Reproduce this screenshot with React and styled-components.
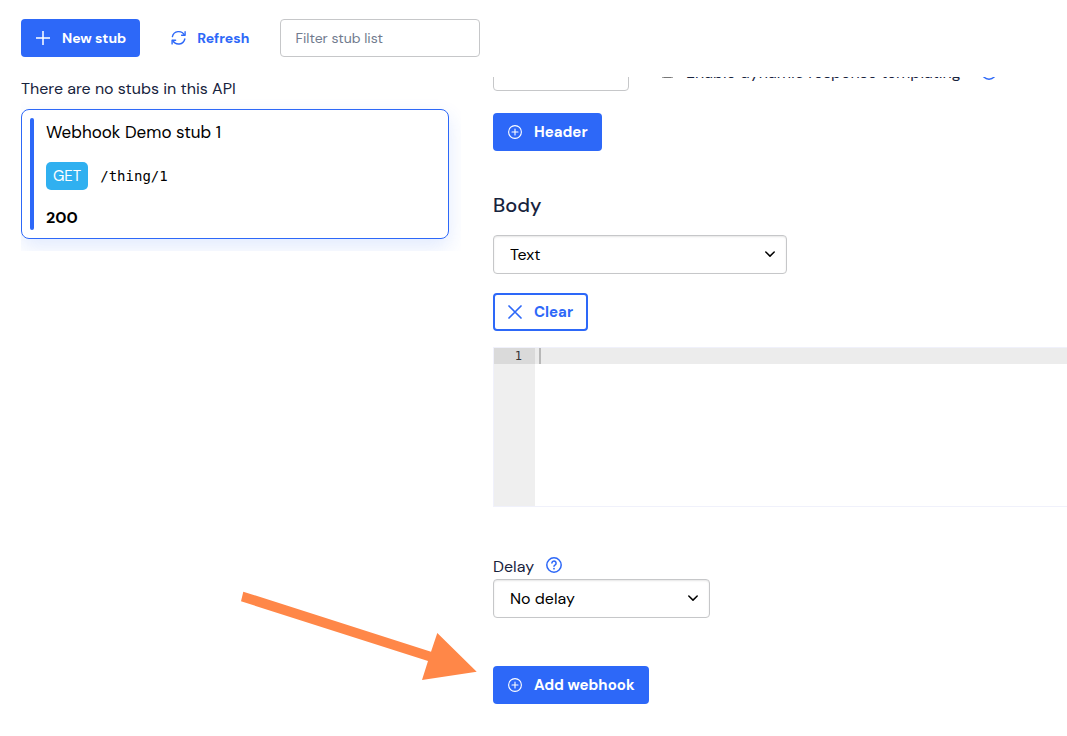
import React from 'react';
import styled, { createGlobalStyle, css } from 'styled-components';

const theme = {
  blue: '#2d68f8',
  sky: '#30b0f0',
  navy: '#17233d',
  grey: '#c6c7c9',
  orange: '#ff8748',
  sans: '"DM Sans", Inter, "Liberation Sans", sans-serif',
  mono: '"DejaVu Sans Mono", "Liberation Mono", monospace',
};

const PlusIcon = () => (
  <svg width="14" height="14" viewBox="0 0 14 14" fill="none" stroke="currentColor" strokeWidth="1.5" aria-hidden="true">
    <path d="M7 0v14M0 7h14" />
  </svg>
);

const RefreshIcon = () => (
  <svg width="16" height="16" viewBox="0 0 16 16" fill="none" stroke="currentColor" strokeWidth="1.4" strokeLinecap="round" strokeLinejoin="round" aria-hidden="true">
    <path d="M14.1 1.8v3.5h-3.5M1.1 13.9v-3.6h3.5" />
    <path d="M1.4 6.6A6.4 6.4 0 0 1 13.4 5.2M13.8 9A6.4 6.4 0 0 1 1.9 10.6" />
  </svg>
);

const PlusCircleIcon = () => (
  <svg width="14" height="14" viewBox="0 0 14 14" fill="none" stroke="currentColor" strokeWidth="1.1" strokeLinecap="round" aria-hidden="true">
    <circle cx="7" cy="7" r="6.4" />
    <path d="M7 4v6M4 7h6" />
  </svg>
);

const CloseIcon = () => (
  <svg width="14" height="14" viewBox="0 0 14 14" fill="none" stroke="currentColor" strokeWidth="1.7" strokeLinecap="round" aria-hidden="true">
    <path d="M1 1l12 12M13 1L1 13" />
  </svg>
);

const HelpIcon = () => (
  <svg width="16" height="16" viewBox="0 0 16 16" fill="none" stroke="currentColor" strokeWidth="1.5" strokeLinecap="round" aria-hidden="true">
    <circle cx="8" cy="8" r="7.2" />
    <path d="M5.9 6.1a2.1 2.1 0 1 1 3.3 1.7c-.8.5-1.2.8-1.2 1.4" />
    <circle cx="8" cy="11.7" r=".9" fill="currentColor" stroke="none" />
  </svg>
);

const ChevronIcon = () => (
  <svg width="12" height="12" viewBox="0 0 12 12" fill="none" stroke="#000" strokeWidth="1.5" strokeLinecap="round" strokeLinejoin="round" aria-hidden="true">
    <path d="M1.8 4L6 8.1L10.2 4" />
  </svg>
);

const Select = ({ id, options, width, label }) => (
  <SelectOuter $width={width}>
    <select id={id} aria-label={label}>
      {options.map(option => <option key={option}>{option}</option>)}
    </select>
    <ChevronIcon />
  </SelectOuter>
);

class App extends React.Component {
  render() {
    return (
      <>
        <GlobalStyle />
        <Page>
          <Toolbar>
            <Button $small><PlusIcon />New stub</Button>
            <Button $small $variant="link"><RefreshIcon />Refresh</Button>
            <FilterInput type="text" placeholder="Filter stub list" aria-label="Filter stub list" />
          </Toolbar>

          <Columns>
            <StubList>
              <p>There are no stubs in this API</p>
              <StubCard>
                <StubBar />
                <StubInfo>
                  <StubName>Webhook Demo stub 1</StubName>
                  <StubRequest>
                    <Method>GET</Method>
                    <code>/thing/1</code>
                  </StubRequest>
                  <strong>200</strong>
                </StubInfo>
              </StubCard>
            </StubList>

            <StubForm>
              <ScrolledRow>
                <StatusRow>
                  <StatusInput type="text" placeholder="200" aria-label="Status" />
                  <TemplatingLabel>
                    <input type="checkbox" />
                    Enable dynamic response templating
                  </TemplatingLabel>
                  <HelpButton aria-label="About templating"><HelpIcon /></HelpButton>
                </StatusRow>
              </ScrolledRow>
              <Button><PlusCircleIcon />Header</Button>

              <h2>Body</h2>
              <Select label="Body type" options={['Text', 'JSON', 'XML']} width={294} />
              <ClearButton $variant="outline"><CloseIcon />Clear</ClearButton>
              <Editor>
                <Gutter>1</Gutter>
                <EditorText aria-label="Body" spellCheck="false" />
                <Caret />
              </Editor>

              <DelayLabel>
                <label htmlFor="delay">Delay</label>
                <HelpButton aria-label="About delay"><HelpIcon /></HelpButton>
              </DelayLabel>
              <Select id="delay" options={['No delay', 'Fixed', 'Random']} width={217} />

              <WebhookRow>
                <Button><PlusCircleIcon />Add webhook</Button>
                <Arrow width="240" height="92" viewBox="0 0 240 92" aria-hidden="true">
                  <path d="M3.3 1.7L191 61.7L197.3 43L236.7 81.7L182 90L188 71L1 11.3Z" />
                </Arrow>
              </WebhookRow>
            </StubForm>
          </Columns>
        </Page>
      </>
    );
  };
}

export default App;

const GlobalStyle = createGlobalStyle`
  * {
    box-sizing: border-box;
  }
  body {
    margin: 0;
    background: #fff;
    color: ${theme.navy};
    font: 400 16px/24px ${theme.sans};
  }
  h2, p {
    margin: 0;
  }
  button, input, select, textarea {
    font-family: inherit;
    margin: 0;
  }
  svg {
    flex: none;
  }
`;

const Page = styled.div`
  padding: 19px 0 32px 21px;
  overflow: hidden;
`;

const Toolbar = styled.div`
  display: flex;
  gap: 16px;
  margin-bottom: 20px;
`;

const variants = {
  outline: css`
    background: #fff;
    border: 2px solid ${theme.blue};
    color: ${theme.blue};
    padding: 0 13px;
  `,
  link: css`
    background: transparent;
    color: ${theme.blue};
    padding: 0 15px;
    gap: 10px;
  `,
};

const Button = styled.button`
  display: inline-flex;
  align-items: center;
  gap: 12px;
  height: 38px;
  padding: 0 14px 0 15px;
  border: 0;
  border-radius: 4px;
  background: ${theme.blue};
  color: #fff;
  font-size: ${props => (props.$small ? 14 : 15)}px;
  font-weight: 700;
  white-space: nowrap;
  cursor: pointer;
  ${props => variants[props.$variant]}
`;

const ClearButton = styled(Button)`
  margin: 19px 0 16px;
`;

const FilterInput = styled.input`
  width: 200px;
  height: 38px;
  padding: 0 14px;
  border: 1px solid ${theme.grey};
  border-radius: 4px;
  font-size: 14px;

  &::placeholder {
    color: #717b8e;
  }
`;

const Columns = styled.div`
  display: grid;
  grid-template-columns: minmax(300px, 440px) 1fr;
  gap: 32px;
  align-items: start;
`;

const StubList = styled.section`
  padding: 0 12px 12px 0;
  overflow: hidden;
`;

const StubCard = styled.article`
  display: flex;
  gap: 12px;
  margin-top: 8px;
  padding: 8px;
  border: 1px solid ${theme.blue};
  border-radius: 8px;
  box-shadow: 0 8px 20px rgba(45, 104, 248, 0.14);
  color: #000;
`;

const StubBar = styled.div`
  width: 4px;
  border-radius: 2px;
  background: ${theme.blue};
`;

const StubInfo = styled.div`
  display: flex;
  flex-direction: column;
  gap: 16px;
`;

const StubName = styled.div`
  font-size: 17px;
  line-height: 28px;
`;

const StubRequest = styled.div`
  display: flex;
  align-items: center;
  gap: 12px;

  code {
    font-family: ${theme.mono};
    font-size: 14px;
  }
`;

const Method = styled.span`
  padding: 0 7px;
  border-radius: 5px;
  background: ${theme.sky};
  color: #fff;
  font-size: 15px;
  line-height: 28px;
`;

const StubForm = styled.section`
  display: flex;
  flex-direction: column;
  align-items: flex-start;
  min-width: 0;

  h2 {
    margin: 39px 0 15px;
    font-size: 20px;
    font-weight: 500;
    line-height: 30px;
  }
`;

// only the bottom edge of this row is left in view once the form is scrolled
const ScrolledRow = styled.div`
  display: flex;
  align-items: flex-end;
  width: 100%;
  height: 14px;
  margin-bottom: 22px;
  overflow: hidden;
`;

const StatusRow = styled.div`
  display: flex;
  align-items: center;
  flex: none;
  height: 38px;
`;

const StatusInput = styled.input`
  width: 136px;
  height: 38px;
  margin-right: 32px;
  padding: 0 16px;
  border: 1px solid ${theme.grey};
  border-radius: 4px;
  font-size: 14px;

  &::placeholder {
    color: #e4e6ea;
  }
`;

const TemplatingLabel = styled.label`
  display: flex;
  align-items: center;
  align-self: flex-end;
  gap: 12px;
  margin-right: 20px;
  line-height: 36px;

  input {
    margin-bottom: 4px;
  }
`;

const HelpButton = styled.button`
  display: flex;
  padding: 2px 0;
  border: 0;
  background: none;
  color: ${theme.blue};
  cursor: pointer;
`;

const SelectOuter = styled.div`
  position: relative;
  width: ${props => props.$width}px;
  max-width: 100%;

  select {
    display: block;
    width: 100%;
    height: 39px;
    padding: 0 40px 0 16px;
    border: 1px solid ${theme.grey};
    border-radius: 4px;
    background: #fff;
    box-shadow: inset 0 1px 2px rgba(0, 0, 0, 0.1);
    color: #000;
    font-size: 16px;
    appearance: none;
  }

  svg {
    position: absolute;
    top: 13px;
    right: 11px;
    pointer-events: none;
  }
`;

const Editor = styled.div`
  display: flex;
  position: relative;
  width: 100%;
  height: 160px;
  border: 1px solid #f0f1fb;
  border-right: 0;
  font: 12px/16px ${theme.mono};
`;

const Gutter = styled.div`
  width: 41px;
  padding-right: 13px;
  background: linear-gradient(#dadada 16px, #efefef 16px);
  color: #333;
  text-align: right;
`;

const EditorText = styled.textarea`
  flex: 1;
  min-width: 0;
  padding: 0 4px;
  border: 0;
  outline: 0;
  background: linear-gradient(#ececec 16px, #fff 16px);
  font: inherit;
  resize: none;
`;

const Caret = styled.span`
  position: absolute;
  top: 0;
  left: 45px;
  width: 2px;
  height: 16px;
  background: #b8b8b8;
`;

const DelayLabel = styled.div`
  display: flex;
  align-items: flex-start;
  gap: 12px;
  margin-top: 48px;
`;

const WebhookRow = styled.div`
  position: relative;
  margin-top: 48px;
`;

const Arrow = styled.svg`
  position: absolute;
  top: -76px;
  right: 100%;
  margin-right: 13px;
  fill: ${theme.orange};
  pointer-events: none;
`;
